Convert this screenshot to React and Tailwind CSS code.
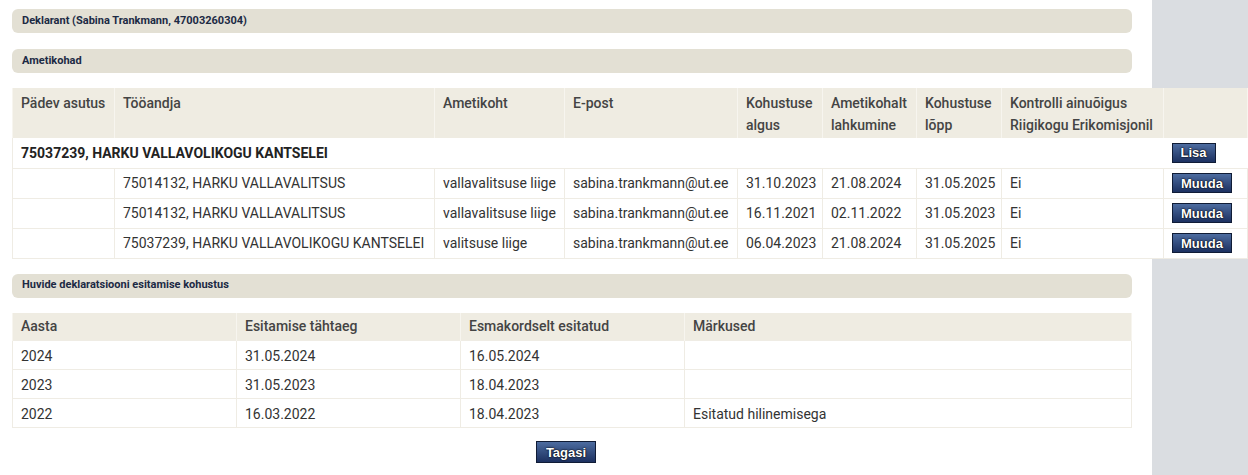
import React from 'react'

const jobs = [
  { employer: '75014132, HARKU VALLAVALITSUS', role: 'vallavalitsuse liige', email: 'sabina.trankmann@ut.ee', start: '31.10.2023', left: '21.08.2024', end: '31.05.2025', ctrl: 'Ei' },
  { employer: '75014132, HARKU VALLAVALITSUS', role: 'vallavalitsuse liige', email: 'sabina.trankmann@ut.ee', start: '16.11.2021', left: '02.11.2022', end: '31.05.2023', ctrl: 'Ei' },
  { employer: '75037239, HARKU VALLAVOLIKOGU KANTSELEI', role: 'valitsuse liige', email: 'sabina.trankmann@ut.ee', start: '06.04.2023', left: '21.08.2024', end: '31.05.2025', ctrl: 'Ei' },
]

const duties = [
  { year: '2024', due: '31.05.2024', first: '16.05.2024', note: '' },
  { year: '2023', due: '31.05.2023', first: '18.04.2023', note: '' },
  { year: '2022', due: '16.03.2022', first: '18.04.2023', note: 'Esitatud hilinemisega' },
]

const SectionBar = ({ children }) => (
  <div className="h-6 rounded-md bg-[#e3e0d4] pl-2.5 flex items-center text-[11px] font-bold text-[#1c2a44]">
    {children}
  </div>
)

const Btn = ({ children, className = '' }) => (
  <button
    className={`h-5 px-2 border border-[#101c36] bg-gradient-to-b from-[#4d6ca0] to-[#1d3160] text-white text-[13px] font-bold leading-none font-['Liberation_Sans',Arial,sans-serif] [text-shadow:0_0_2px_#000,0_0_1px_#000] ${className}`}
  >
    {children}
  </button>
)

const th = 'px-2 pt-1 pb-px align-top text-left font-medium text-[#444] border-x border-[#f7f5ef]'
const td = 'px-2 py-1 border border-[#efece4]'
const td2 = 'px-2 pt-[5px] pb-[3px] border border-[#efece4]'

export default function App() {
  return (
    <div className="flex min-h-[475px] font-['Roboto','Liberation_Sans',sans-serif] text-[14px] text-[#333]">
      {/* Main content */}
      <div className="w-[1152px] shrink-0 bg-white pl-3 pr-5 pt-[9px]">
        <SectionBar>Deklarant (Sabina Trankmann, 47003260304)</SectionBar>
        <div className="mt-4">
          <SectionBar>Ametikohad</SectionBar>
        </div>

        {/* Ametikohad table */}
        <table className="relative mt-[15px] w-[1235px] table-fixed border-collapse bg-white leading-[22px]">
          <colgroup>
            <col className="w-[102px]" />
            <col className="w-[320px]" />
            <col className="w-[130px]" />
            <col className="w-[173px]" />
            <col className="w-[85px]" />
            <col className="w-[94px]" />
            <col className="w-[85px]" />
            <col className="w-[162px]" />
            <col className="w-[84px]" />
          </colgroup>
          <thead>
            <tr className="h-[50px] bg-[#efece2]">
              <th className={th}>Pädev asutus</th>
              <th className={th}>Tööandja</th>
              <th className={th}>Ametikoht</th>
              <th className={th}>E-post</th>
              <th className={th}>Kohustuse algus</th>
              <th className={th}>Ametikohalt lahkumine</th>
              <th className={th}>Kohustuse lõpp</th>
              <th className={th}>Kontrolli ainuõigus Riigikogu Erikomisjonil</th>
              <th className={th}></th>
            </tr>
          </thead>
          <tbody className="leading-[21px]">
            <tr className="h-[30px]">
              <td colSpan={8} className="px-2 pt-[5px] pb-[3px] font-bold text-[#222] border-l border-[#efece4]">
                75037239, HARKU VALLAVOLIKOGU KANTSELEI
              </td>
              <td className="px-2 py-1">
                <Btn>Lisa</Btn>
              </td>
            </tr>
            {jobs.map((j, i) => (
              <tr key={i} className="h-[30px]">
                <td className={td}></td>
                <td className={td}>{j.employer}</td>
                <td className={td}>{j.role}</td>
                <td className={td}>{j.email}</td>
                <td className={td}>{j.start}</td>
                <td className={td}>{j.left}</td>
                <td className={td}>{j.end}</td>
                <td className={td}>{j.ctrl}</td>
                <td className={td}>
                  <Btn>Muuda</Btn>
                </td>
              </tr>
            ))}
          </tbody>
        </table>

        <div className="mt-[15px]">
          <SectionBar>Huvide deklaratsiooni esitamise kohustus</SectionBar>
        </div>

        {/* Kohustus table */}
        <table className="mt-[15px] w-full table-fixed border-collapse leading-5">
          <colgroup>
            <col className="w-[224px]" />
            <col className="w-[224px]" />
            <col className="w-[224px]" />
            <col />
          </colgroup>
          <thead>
            <tr className="h-7 bg-[#efece2]">
              <th className="px-2 text-left font-medium text-[#444] border-x border-[#f7f5ef]">Aasta</th>
              <th className="px-2 text-left font-medium text-[#444] border-x border-[#f7f5ef]">Esitamise tähtaeg</th>
              <th className="px-2 text-left font-medium text-[#444] border-x border-[#f7f5ef]">Esmakordselt esitatud</th>
              <th className="px-2 text-left font-medium text-[#444] border-x border-[#f7f5ef]">Märkused</th>
            </tr>
          </thead>
          <tbody>
            {duties.map((d) => (
              <tr key={d.year} className="h-[29px]">
                <td className={td2}>{d.year}</td>
                <td className={td2}>{d.due}</td>
                <td className={td2}>{d.first}</td>
                <td className={td2}>{d.note}</td>
              </tr>
            ))}
          </tbody>
        </table>

        <div className="mt-[13px] flex justify-center pr-[12px]">
          <Btn className="h-[22px] px-[9px]">Tagasi</Btn>
        </div>
      </div>

      {/* Right sidebar */}
      <div className="flex-1 bg-[#dadde1]" />
    </div>
  )
}
